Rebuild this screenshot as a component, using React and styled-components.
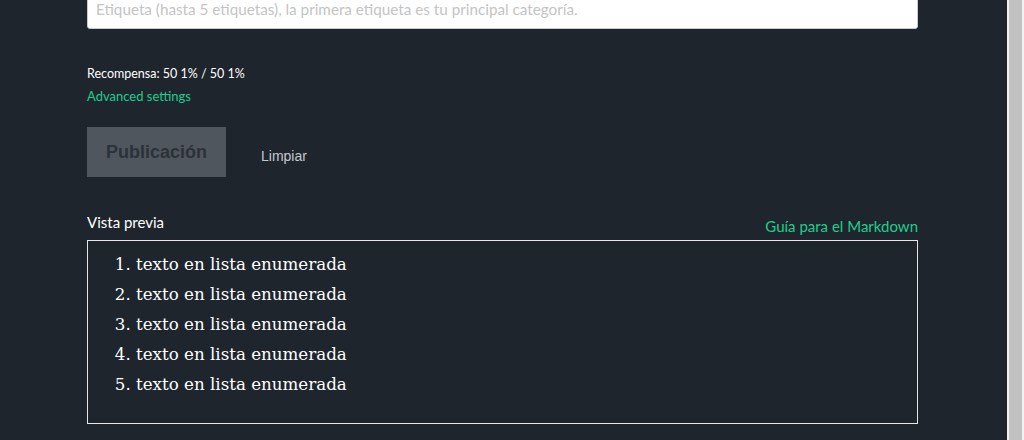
import React from 'react'
import styled, { createGlobalStyle } from 'styled-components'

const GlobalStyle = createGlobalStyle`
    html, body {
        margin: 0;
        padding: 0;
        height: 440px;
        overflow: hidden;
        background-color: #1e252d;
    }
`;

const Page = styled.div`
    display: flex;
    height: 440px;
    font-family: Lato, "Open Sans", sans-serif;
`;

const Main = styled.main`
    flex: 1;
    padding: 0 89px 0 87px;
    display: flex;
    flex-direction: column;
`;

const ScrollTrack = styled.div`
    width: 17px;
    background-color: #f1f1f1;
    display: flex;
    padding: 0 2px 0 2px;
    box-sizing: border-box;

    & div {
        flex: 1;
        background-color: #c1c1c1;
    }
`;

const TagInput = styled.input`
    margin-top: -11px;
    height: 40px;
    box-sizing: border-box;
    width: 100%;
    border: 1px solid #cacaca;
    border-radius: 0 0 3px 3px;
    background-color: #fff;
    padding: 0 8px;
    font-family: Lato, sans-serif;
    font-size: 15.25px;
    outline: none;

    &::placeholder {
        color: #c4c4c4;
    }
`;

const Reward = styled.div`
    margin-top: 34px;
    font-size: 12.5px;
    line-height: 22px;
    color: #fff;
`;

const GreenLink = styled.a`
    color: #1fce8e;
    font-size: ${props => props.size || 13}px;
    line-height: ${props => props.size ? 14 : 22}px;
    text-decoration: none;
    cursor: pointer;
`;

const Actions = styled.div`
    margin-top: 20px;
    display: flex;
    align-items: center;
    gap: 35px;
`;

const PublishButton = styled.button`
    width: 139px;
    height: 50px;
    border: none;
    background-color: #4f565e;
    color: #2c3238;
    font-family: "Liberation Sans", Arial, sans-serif;
    font-size: 18px;
    font-weight: bold;
    cursor: not-allowed;
`;

const ClearButton = styled.button`
    border: none;
    background: none;
    padding: 0;
    margin-top: 8px;
    color: #c3c8cd;
    font-family: "Liberation Sans", Arial, sans-serif;
    font-size: 14px;
    cursor: pointer;
`;

const PreviewHeader = styled.div`
    margin-top: 36px;
    display: flex;
    justify-content: space-between;
    align-items: flex-end;
    height: 20px;
`;

const PreviewTitle = styled.span`
    color: #fff;
    font-size: 15px;
    line-height: 18px;
    margin-bottom: 2px;
`;

const PreviewBox = styled.div`
    margin-top: 7px;
    height: 184px;
    box-sizing: border-box;
    border: 1px solid #e6e6e6;
    padding: 8px 0 0 0;
`;

const NumberedList = styled.ol`
    margin: 0;
    padding-left: 48px;
    color: #fff;
    font-family: "DejaVu Serif", Georgia, serif;
    font-size: 16.7px;

    li {
        line-height: 30px;
    }
`;

const App = () => {
    const items = [1, 2, 3, 4, 5]

    return (
        <Page>
            <GlobalStyle />
            <Main>
                <TagInput placeholder='Etiqueta (hasta 5 etiquetas), la primera etiqueta es tu principal categoría.' />
                <Reward>Recompensa: 50 1% / 50 1%</Reward>
                <GreenLink>Advanced settings</GreenLink>
                <Actions>
                    <PublishButton disabled>Publicación</PublishButton>
                    <ClearButton>Limpiar</ClearButton>
                </Actions>
                <PreviewHeader>
                    <PreviewTitle>Vista previa</PreviewTitle>
                    <GreenLink size={15}>Guía para el Markdown</GreenLink>
                </PreviewHeader>
                <PreviewBox>
                    <NumberedList>
                        {items.map(i => <li key={i}>texto en lista enumerada</li>)}
                    </NumberedList>
                </PreviewBox>
            </Main>
            <ScrollTrack><div /></ScrollTrack>
        </Page>
    )
}

export default App
